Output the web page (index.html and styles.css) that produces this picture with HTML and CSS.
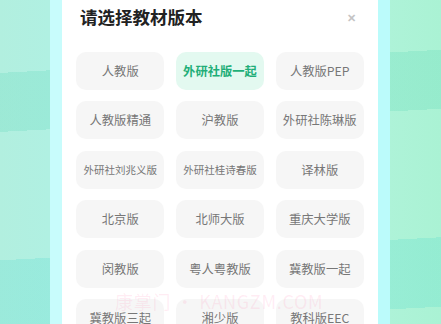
FILE: index.html
```html
<!DOCTYPE html>
<html lang="zh">
<head>
<meta charset="utf-8">
<link rel="stylesheet" href="styles.css">
</head>
<body>
<div class="stage">
  <div class="sheet">
    <div class="header">
      <h1 class="title">请选择教材版本</h1>
      <span class="close">✕</span>
    </div>
    <div class="grid">
      <div class="opt">人教版</div>
      <div class="opt active">外研社版一起</div>
      <div class="opt">人教版PEP</div>
      <div class="opt">人教版精通</div>
      <div class="opt">沪教版</div>
      <div class="opt">外研社陈琳版</div>
      <div class="opt small">外研社刘兆义版</div>
      <div class="opt small">外研社桂诗春版</div>
      <div class="opt">译林版</div>
      <div class="opt">北京版</div>
      <div class="opt">北师大版</div>
      <div class="opt">重庆大学版</div>
      <div class="opt">闵教版</div>
      <div class="opt">粤人粤教版</div>
      <div class="opt">冀教版一起</div>
      <div class="opt">冀教版三起</div>
      <div class="opt">湘少版</div>
      <div class="opt">教科版EEC</div>
    </div>
    <div class="watermark">康掌门 • KANGZM.COM</div>
  </div>
</div>
</body>
</html>
```
FILE: styles.css
```css
html, body {
  margin: 0;
  padding: 0;
}
body {
  width: 441px;
  height: 324px;
  overflow: hidden;
  font-family: "Noto Sans CJK SC", "Noto Sans", sans-serif;
  background:
    linear-gradient(177deg, transparent 0 21%, rgba(60, 205, 170, 0.18) 21% 38%, transparent 38% 75%, rgba(50, 210, 200, 0.18) 75% 95%, transparent 95%),
    linear-gradient(90deg, #b2efdf 0%, #b0f0e2 11%, #aef3d8 88%, #aaf2d4 100%);
}
.stage {
  padding-left: 50px;
}
.sheet {
  position: relative;
  box-sizing: border-box;
  width: 340px;
  height: 324px;
  border-left: 12px solid rgba(190, 252, 252, 0.85);
  border-right: 12px solid rgba(175, 250, 250, 0.85);
  background: #fff;
  padding: 7px 14px 0;
  overflow: hidden;
}
.header {
  display: flex;
  justify-content: space-between;
  align-items: center;
  height: 20px;
  padding: 0 8px 0 4px;
}
.title {
  margin: 0;
  font-size: 17.5px;
  font-weight: 700;
  color: #222;
  line-height: 20px;
}
.close {
  font-size: 11px;
  font-weight: 700;
  color: #c4c4c4;
  line-height: 20px;
}
.grid {
  margin-top: 25px;
  display: grid;
  grid-template-columns: repeat(3, 1fr);
  column-gap: 11.3px;
  row-gap: 11.4px;
}
.opt {
  height: 38px;
  border-radius: 10px;
  background: #f6f6f6;
  color: #777;
  font-size: 12.3px;
  display: flex;
  align-items: center;
  justify-content: center;
  white-space: nowrap;
}
.opt.small {
  font-size: 10.5px;
}
.opt.active {
  background: #e3f9f0;
  color: #1fae78;
  font-weight: 700;
}
.watermark {
  position: absolute;
  left: 53px;
  top: 288px;
  font-size: 18px;
  letter-spacing: 0.7px;
  color: rgba(255, 110, 165, 0.13);
  white-space: nowrap;
}
```
